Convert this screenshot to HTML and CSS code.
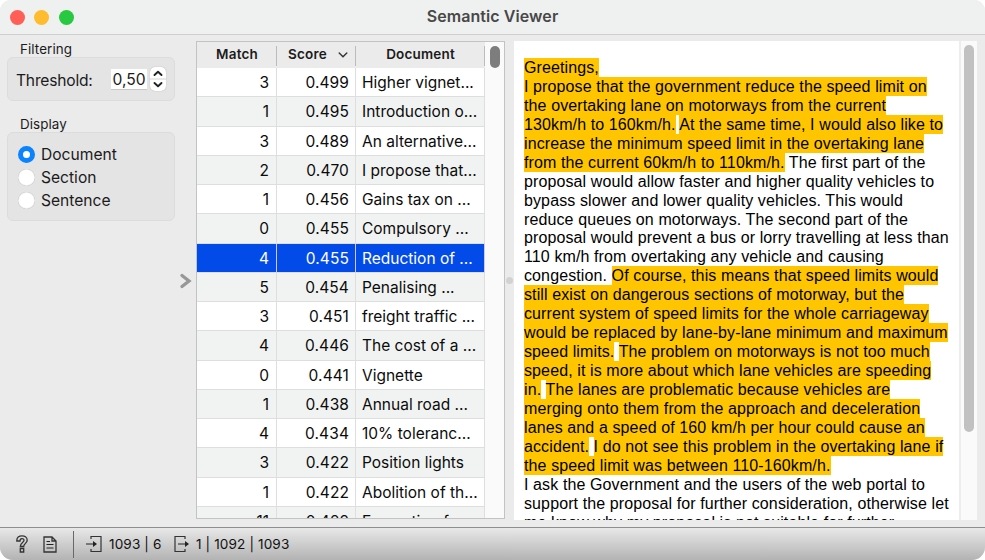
FILE: index.html
```html
<!DOCTYPE html>
<html lang="en">
<head>
<meta charset="utf-8">
<title>Semantic Viewer</title>
<link rel="stylesheet" href="styles.css">
</head>
<body>
<div class="window">
  <header class="titlebar">
    <div class="lights"><i class="light close"></i><i class="light minimize"></i><i class="light zoom"></i></div>
    <h1>Semantic Viewer</h1>
  </header>
  <main class="content">
    <aside class="sidebar">
      <h2>Filtering</h2>
      <div class="group threshold">
        <span class="label">Threshold:</span>
        <span class="field">0,50</span>
        <svg class="stepper" viewBox="0 0 16 24"><path d="M0 12h16" stroke="#d5d5d5"/><path d="M4.500 8 8 4.800 11.500 8M4.500 16 8 19.200 11.500 16" fill="none" stroke="#222" stroke-width="1.900" stroke-linecap="round" stroke-linejoin="round"/></svg>
      </div>
      <h2 class="second">Display</h2>
      <div class="group display">
        <div class="option"><i class="radio checked"></i>Document</div>
        <div class="option"><i class="radio"></i>Section</div>
        <div class="option"><i class="radio"></i>Sentence</div>
      </div>
    </aside>
    <div class="collapse"><svg viewBox="0 0 13 18"><path d="M3 3.500 10 9 3 14.500" fill="none" stroke="#979797" stroke-width="3.300" stroke-linecap="round"/></svg></div>
    <section class="matches">
      <div class="table">
        <div class="head"><span>Match</span><span class="score">Score<svg viewBox="0 0 10 6"><path d="M1.200 1 5 4.800 8.800 1" fill="none" stroke="#333" stroke-width="1.400" stroke-linecap="round"/></svg></span><span>Document</span></div>
        <div class="row"><span>3</span><span>0.499</span><span>Higher vignet...</span></div>
        <div class="row"><span>1</span><span>0.495</span><span>Introduction o...</span></div>
        <div class="row"><span>3</span><span>0.489</span><span>An alternative...</span></div>
        <div class="row"><span>2</span><span>0.470</span><span>I propose that...</span></div>
        <div class="row"><span>1</span><span>0.456</span><span>Gains tax on ...</span></div>
        <div class="row"><span>0</span><span>0.455</span><span>Compulsory ...</span></div>
        <div class="row selected"><span>4</span><span>0.455</span><span>Reduction of ...</span></div>
        <div class="row"><span>5</span><span>0.454</span><span>Penalising ...</span></div>
        <div class="row"><span>3</span><span>0.451</span><span>freight traffic ...</span></div>
        <div class="row"><span>4</span><span>0.446</span><span>The cost of a ...</span></div>
        <div class="row"><span>0</span><span>0.441</span><span>Vignette</span></div>
        <div class="row"><span>1</span><span>0.438</span><span>Annual road ...</span></div>
        <div class="row"><span>4</span><span>0.434</span><span>10% toleranc...</span></div>
        <div class="row"><span>3</span><span>0.422</span><span>Position lights</span></div>
        <div class="row"><span>1</span><span>0.422</span><span>Abolition of th...</span></div>
        <div class="row"><span>11</span><span>0.422</span><span>Exemption fro...</span></div>
      </div>
      <div class="scroll"><i></i></div>
    </section>
    <div class="splitter"><i></i></div>
    <section class="viewer">
      <div class="text"><mark>Greetings,<br>I propose that the government reduce the speed limit on<br>the overtaking lane on motorways from the current<br>130km/h to 160km/h.</mark> <mark>At the same time, I would also like to<br>increase the minimum speed limit in the overtaking lane<br>from the current 60km/h to 110km/h.</mark> The first part of the<br>proposal would allow faster and higher quality vehicles to<br>bypass slower and lower quality vehicles. This would<br>reduce queues on motorways. The second part of the<br>proposal would prevent a bus or lorry travelling at less than<br>110 km/h from overtaking any vehicle and causing<br>congestion. <mark>Of course, this means that speed limits would<br>still exist on dangerous sections of motorway, but the<br>current system of speed limits for the whole carriageway<br>would be replaced by lane-by-lane minimum and maximum<br>speed limits.</mark> <mark>The problem on motorways is not too much<br>speed, it is more about which lane vehicles are speeding<br>in.</mark> <mark>The lanes are problematic because vehicles are<br>merging onto them from the approach and deceleration<br>lanes and a speed of 160 km/h per hour could cause an<br>accident.</mark> <mark>I do not see this problem in the overtaking lane if<br>the speed limit was between 110-160km/h.</mark><br>I ask the Government and the users of the web portal to<br>support the proposal for further consideration, otherwise let<br>me know why my proposal is not suitable for further</div>
      <div class="scroll"><i></i></div>
    </section>
  </main>
  <footer class="status">
    <svg class="help" viewBox="0 0 12 18"><path d="M.8 6C.6 2.500 3 .8 6 .8s5.200 1.700 5.200 4.400c0 3-3.500 3.300-3.500 6.300H4.300C4.300 7.500 8 7.500 8 5.200 8 3.200 4 3 4 6Z M4.300 13.500h3.400V17H4.300Z" fill="none" stroke="#333" stroke-width="1.300"/></svg>
    <svg class="report" viewBox="0 0 14 17"><path d="M1 1h8l4 4v11H1Z M9 1v4h4" fill="none" stroke="#333" stroke-width="1.300"/><path d="M3.500 5.500H7M3.500 8.500h7M3.500 12h7" stroke="#222" stroke-width="1.100"/></svg>
    <i class="divider"></i>
    <svg class="input" viewBox="0 0 16 18"><path d="M5 4V1.500h10v15H5V14" fill="none" stroke="#333" stroke-width="1.200"/><path d="M0 9h8" stroke="#222" stroke-width="1.200"/><path d="m7 6 4 3-4 3Z" fill="#222"/></svg>
    <span class="incount">1093 | 6</span>
    <svg class="output" viewBox="0 0 16 18"><path d="M11 4V1.500H1v15h10V14" fill="none" stroke="#333" stroke-width="1.200"/><path d="M4 9h8" stroke="#222" stroke-width="1.200"/><path d="m11 6 4 3-4 3Z" fill="#222"/></svg>
    <span class="outcount">1 | 1092 | 1093</span>
  </footer>
</div>
</body>
</html>
```
FILE: styles.css
```css
* { box-sizing: border-box; }
body { margin: 0; background: #fff; font-family: Inter, "Liberation Sans", sans-serif; color: #1b1b1b; }
svg { display: block; flex: none; }
.window { width: 985px; height: 560px; display: flex; flex-direction: column; overflow: hidden; background: #ebebeb; border-radius: 11px 11px 13px 13px; }
.titlebar { height: 35px; flex: none; display: grid; grid-template-columns: 100px 1fr 100px; align-items: center; background: #eff1f0; border-bottom: 1px solid #cfcfcf; }
.lights { display: flex; gap: 9.500px; padding-left: 9.500px; }
.light { width: 15px; height: 15px; border-radius: 50%; }
.close { background: #ff5f57; }
.minimize { background: #febc2e; }
.zoom { background: #28c840; }
h1 { margin: 0; font-size: 16px; font-weight: 600; line-height: 20px; text-align: center; color: #484848; padding-bottom: 2px; letter-spacing: 0.080px; }
.content { height: 492px; flex: none; display: flex; align-items: flex-start; }
.sidebar { width: 174px; padding: 6px 0 0 7px; flex: none; }
h2 { margin: 0 0 0 13px; font-size: 13.400px; font-weight: 400; line-height: 17px; height: 16px; letter-spacing: 0.090px; }
.group { width: 168px; background: #e4e4e4; border: 1px solid #dcdcdc; border-radius: 6px; }
.threshold { height: 44px; display: flex; align-items: center; padding-left: 8px; font-size: 15.600px; }
.label { width: 95px; padding-top: 2px; letter-spacing: -0.200px; }
.field { width: 36px; height: 21px; line-height: 22px; text-align: center; background: #fff; border-bottom: 1px solid #c8c8c8; margin: 1px 3px 0 0; white-space: nowrap; }
.stepper { width: 16px; height: 24px; border-radius: 5px; background: #fff; box-shadow: 0 0 1px #999; }
.second { margin-top: 15px; }
.display { height: 89px; padding: 10px 0 0 10px; font-size: 15.600px; }
.option { display: flex; align-items: center; height: 23.200px; gap: 6px; }
.radio { width: 17px; height: 17px; border-radius: 50%; background: #fff; box-shadow: inset 0 0 1px #888; }
.checked { border: 5px solid #0a83ff; box-shadow: none; }
.collapse { width: 22px; align-self: stretch; padding: 237px 0 0 5px; flex: none; }
.collapse svg { width: 13px; height: 18px; }
.matches { width: 309px; height: 478px; margin-top: 6px; display: flex; overflow: hidden; border: 1px solid #c3c3c3; background: #fafafa; flex: none; }
.table { width: 288px; flex: none; }
.head, .row { display: grid; grid-template-columns: 80px 79px 129px; }
.head { height: 26px; background: #ebebeb; font-size: 13.500px; font-weight: 600; text-align: center; line-height: 25px; letter-spacing: 0.180px; }
.head span { background: linear-gradient(#bbb, #bbb) right 4px / 1px 20px no-repeat; }
.head .score { display: flex; align-items: center; justify-content: center; gap: 11px; padding: 0 0 1px 3px; }
.score svg { width: 10px; height: 6px; margin-top: 1px; }
.row { height: 29.270px; line-height: 29px; font-size: 15.500px; color: #0b0b0b; background: #fff; }
.row:nth-child(odd) { background: #f1f3f2; }
.row span { border-right: 1px solid #dedede; border-bottom: 1px solid #dedede; text-align: right; padding-right: 7px; white-space: nowrap; overflow: hidden; }
.row span:nth-child(2) { letter-spacing: 0.100px; padding-right: 6px; }
.row span:last-child { text-align: left; padding: 0 0 0 6px; }
.row.selected { background: #034be8; color: #fff; }
.row.selected span { border-right-color: #d3c8d8; }
.matches .scroll { flex: 1; padding: 4px 0 0 5px; }
.matches .scroll i { display: block; width: 10px; height: 22px; border-radius: 5px; background: #7d7d7d; }
.splitter { width: 9px; padding: 242px 0 0 1px; flex: none; }
.splitter i { display: block; width: 7px; height: 7px; border-radius: 50%; background: #d2d2d2; }
.viewer { width: 463px; height: 479px; margin-top: 6px; display: flex; overflow: hidden; background: #fff; }
.text { width: 445px; padding: 18px 0 0 10px; flex: none; font: 16px/18.930px "Liberation Sans", Arial, sans-serif; letter-spacing: 0.110px; color: #000; white-space: nowrap; }
mark { background: #ffc600; color: inherit; padding: 1px 0; }
.viewer .scroll { flex: 1; border-left: 2px solid #ededed; background: #fafafa; padding: 4px 0 0 3px; }
.viewer .scroll i { display: block; width: 10px; height: 387px; border-radius: 5px; background: #c1c1c1; }
.status { height: 33px; flex: none; display: flex; align-items: center; border-top: 1px solid #8e8e8e; background: linear-gradient(#e8e8e8, #b3b3b3); font-size: 13.600px; letter-spacing: 0.120px; padding-left: 16px; color: #111; white-space: nowrap; }
.help { width: 12px; height: 18px; margin-right: 15px; }
.report { width: 14px; height: 17px; margin-right: 16px; }
.divider { width: 1px; height: 27px; background: #686868; margin-right: 12px; }
.input, .output { width: 16px; height: 18px; }
.incount { width: 65px; margin-left: 7px; }
.output { margin-right: 6px; }
```
